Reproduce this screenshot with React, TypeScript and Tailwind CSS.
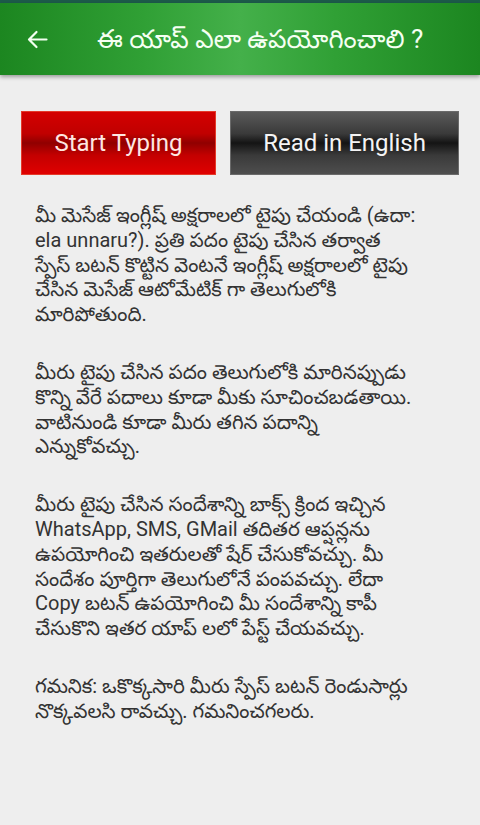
import React from "react";

const paragraphs: string[][] = [
  [
    "మీ మెసేజ్ ఇంగ్లీష్ అక్షరాలలో టైపు చేయండి (ఉదా:",
    "ela unnaru?). ప్రతి పదం టైపు చేసిన తర్వాత",
    "స్పేస్ బటన్ కొట్టిన వెంటనే ఇంగ్లీష్ అక్షరాలలో టైపు",
    "చేసిన మెసేజ్ ఆటోమేటిక్ గా తెలుగులోకి",
    "మారిపోతుంది.",
  ],
  [
    "మీరు టైపు చేసిన పదం తెలుగులోకి మారినప్పుడు",
    "కొన్ని వేరే పదాలు కూడా మీకు సూచించబడతాయి.",
    "వాటినుండి కూడా మీరు తగిన పదాన్ని",
    "ఎన్నుకోవచ్చు.",
  ],
  [
    "మీరు టైపు చేసిన సందేశాన్ని బాక్స్ క్రింద ఇచ్చిన",
    "WhatsApp, SMS, GMail తదితర ఆప్షన్లను",
    "ఉపయోగించి ఇతరులతో షేర్ చేసుకోవచ్చు. మీ",
    "సందేశం పూర్తిగా తెలుగులోనే పంపవచ్చు. లేదా",
    "Copy బటన్ ఉపయోగించి మీ సందేశాన్ని కాపీ",
    "చేసుకొని ఇతర యాప్ లలో పేస్ట్ చేయవచ్చు.",
  ],
  [
    "గమనిక: ఒకొక్కసారి మీరు స్పేస్ బటన్ రెండుసార్లు",
    "నొక్కవలసి రావచ్చు. గమనించగలరు.",
  ],
];

export default function App() {
  return (
    <div
      className="w-[480px] h-[825px] bg-[#eeeeee] overflow-hidden flex flex-col"
      style={{ fontFamily: "Roboto, 'Noto Sans', 'Noto Sans Telugu', sans-serif" }}
    >
      <div className="h-[3px] bg-[#1d5b4a]" />
      <div className="h-[72px] flex items-center bg-[linear-gradient(90deg,#1c8620_0%,#30a035_30%,#44b04a_50%,#30a035_70%,#1c8620_100%)] shadow-[0_2px_4px_rgba(0,0,0,0.35)] relative z-10">
        <div className="w-[76px] pl-[27px] flex items-center">
          <svg width="21" height="19" viewBox="0 0 21 19" fill="none" stroke="#f2fff0" strokeWidth="2.2" strokeLinecap="round" strokeLinejoin="round">
            <path d="M19.5 9.5H2.5M9.5 2L2 9.5l7.5 7.5" />
          </svg>
        </div>
        <div className="pl-[21px] text-[26px] leading-none text-[#f5fff2] whitespace-nowrap">
          ఈ యాప్ ఎలా ఉపయోగించాలి ?
        </div>
      </div>
      <div className="flex gap-[14px] pl-[21px] mt-[36px]">
        <div className="w-[195px] h-[64px] flex items-center justify-center text-[24px] text-[#ffe6e0] bg-[linear-gradient(180deg,#d40000_0%,#c00000_35%,#900000_50%,#c40000_70%,#e00000_100%)] border border-[#e43a2a]">
          Start Typing
        </div>
        <div className="w-[229px] h-[64px] flex items-center justify-center text-[24px] text-[#f4f4f4] bg-[linear-gradient(180deg,#5a5a5a_0%,#3a3a3a_35%,#141414_50%,#3a3a3a_70%,#4e4e4e_100%)] border border-[#6a6a6a]">
          Read in English
        </div>
      </div>
      <div className="pl-[35px] pt-[28px] text-[20px] leading-[24.8px] text-[#333333] flex flex-col gap-[33px]">
        {paragraphs.map((p, i) => (
          <div key={i}>
            {p.map((line, j) => (
              <div key={j} className="whitespace-nowrap">
                {line}
              </div>
            ))}
          </div>
        ))}
      </div>
    </div>
  );
}
